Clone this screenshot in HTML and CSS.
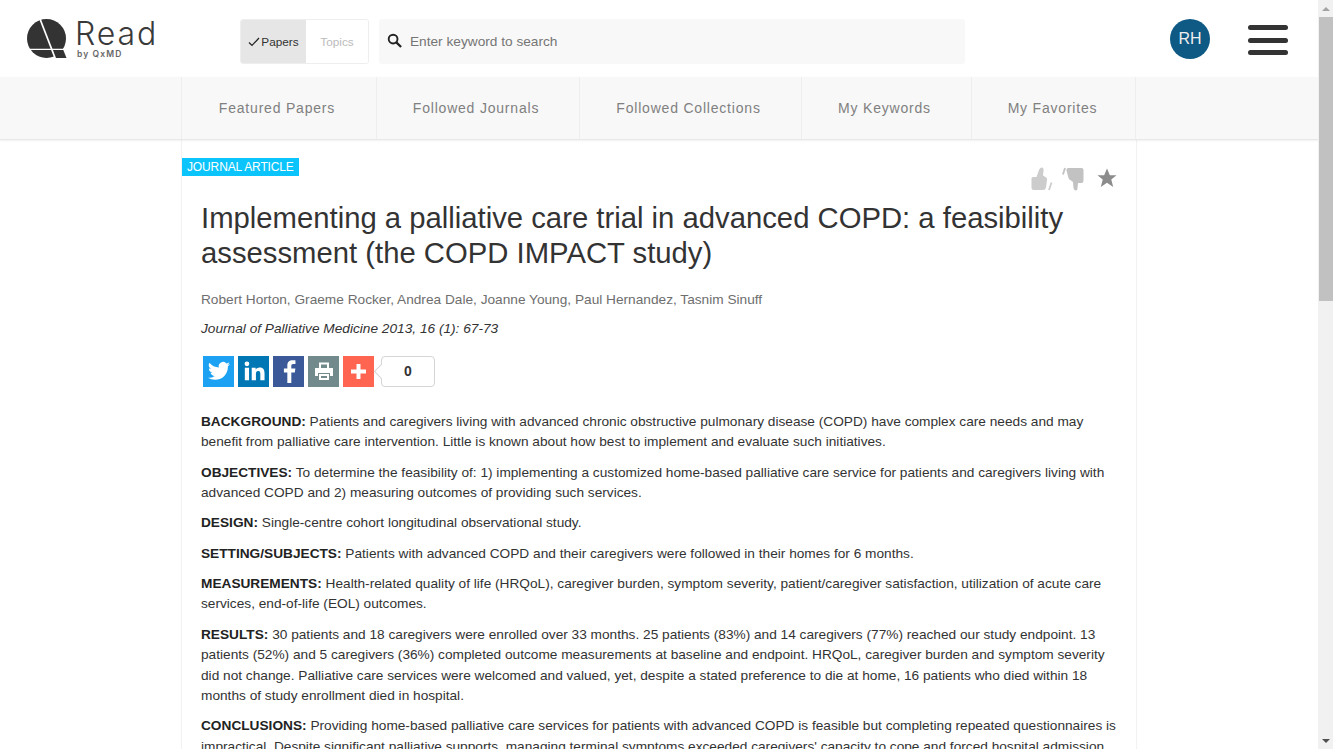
FILE: index.html
```html
<!DOCTYPE html>
<html lang="en">
<head>
<meta charset="utf-8">
<title>Read by QxMD</title>
<link rel="stylesheet" href="styles.css">
</head>
<body>
<div class="window">
  <div class="page">
    <header class="topbar">
      <a class="logo">
        <svg class="logo-mark" width="40" height="40" viewBox="0 0 40 40">
          <circle cx="19.500" cy="19.500" r="19.500" fill="#333"/>
          <path d="M27 29H35.500L39.500 39H28Z" fill="#333"/>
          <path d="M13 0L28.500 40" stroke="#fff" stroke-width="1.700" fill="none"/>
          <path d="M3 30.300L38 30.300" stroke="#fff" stroke-width="1.300" fill="none"/>
        </svg>
        <span class="logo-text">
          <span class="logo-read">Read</span>
          <span class="logo-by">by QxMD</span>
        </span>
      </a>
      <div class="toggle">
        <span class="toggle-on">
          <svg width="12" height="10" viewBox="0 0 12 10"><path d="M1 5.500L4 8.500L11 1" stroke="#222" stroke-width="1.200" fill="none"/></svg>Papers</span>
        <span class="toggle-off">Topics</span>
      </div>
      <div class="search">
        <svg class="search-icon" width="15" height="15" viewBox="0 0 16 16"><circle cx="6.500" cy="6.500" r="4.700" stroke="#222" stroke-width="2" fill="none"/><path d="M10 10L15 15" stroke="#222" stroke-width="2.400"/></svg>
        <span class="search-text">Enter keyword to search</span>
      </div>
      <div class="avatar">RH</div>
      <div class="burger"><i></i><i></i><i></i></div>
    </header>
    <nav class="tabs">
      <div class="tabs-inner">
        <a class="tab tab-1">Featured Papers</a>
        <a class="tab tab-2">Followed Journals</a>
        <a class="tab tab-3">Followed Collections</a>
        <a class="tab tab-4">My Keywords</a>
        <a class="tab tab-5">My Favorites</a>
      </div>
    </nav>
    <main class="article">
      <div class="badge-row">
        <span class="badge">JOURNAL ARTICLE</span>
        <div class="actions">
          <svg width="22" height="24" viewBox="0 0 22 24"><path d="M0.500 11.500Q0.500 10 2 10H5.500L8 3Q9 0 11 0.500Q13 1 12.500 4L12 8.500L14.500 10Q16.500 11 16 13L15 20.500Q14.500 23 12 23H3Q0.500 23 0.500 20.500Z" fill="#ccc"/><path d="M20.500 15.500L18 23" stroke="#ccc" stroke-width="1.800"/></svg>
          <svg width="22" height="24" viewBox="0 0 22 24"><path d="M21.500 3Q21.500 1 19.500 1H6.500Q4 1 4.500 3.500L6.500 11Q7 12.500 9 13.500L11 15L11.500 21Q12 23.500 14 23.500Q15.500 23.500 15.500 21L16 16H19.500Q21.500 16 21.500 13.500Z" fill="#c2c2c2"/><path d="M3 1L1 7.500" stroke="#c2c2c2" stroke-width="1.800"/></svg>
          <svg class="star" width="20" height="20" viewBox="0 0 21 20"><path d="M10.500 0L13.500 7H20.500L15 11.500L17 19.500L10.500 15L4 19.500L6 11.500L0.500 7H7.500Z" fill="#8c8c8c"/></svg>
        </div>
      </div>
      <h1 class="title">Implementing a palliative care trial in advanced COPD: a feasibility assessment (the COPD IMPACT study)</h1>
      <p class="authors">Robert Horton, Graeme Rocker, Andrea Dale, Joanne Young, Paul Hernandez, Tasnim Sinuff</p>
      <p class="journal">Journal of Palliative Medicine 2013, 16 (1): 67-73</p>
      <div class="share">
        <span class="sq sq-tw"><svg width="24" height="24" viewBox="0 0 24 24"><path fill="#fff" d="M23 5.100a9 9 0 0 1-2.600.7 4.500 4.500 0 0 0 2-2.500 9 9 0 0 1-2.900 1.100 4.500 4.500 0 0 0-7.700 4.100A12.800 12.800 0 0 1 2.500 3.800a4.500 4.500 0 0 0 1.400 6 4.500 4.500 0 0 1-2-.6v.1a4.500 4.500 0 0 0 3.600 4.400 4.500 4.500 0 0 1-2 .1 4.500 4.500 0 0 0 4.200 3.100A9 9 0 0 1 1 18.800 12.800 12.800 0 0 0 8 20.800c8.300 0 12.900-6.900 12.900-12.900v-.6A9 9 0 0 0 23 5.100z"/></svg></span>
        <span class="sq sq-li"><svg width="22" height="22" viewBox="0 0 24 24"><path fill="#fff" d="M2 8.500h4.600V22H2zM4.300 1.500a2.600 2.600 0 1 1 0 5.200 2.600 2.600 0 0 1 0-5.200zM9.500 8.500h4.300v1.900c.7-1.200 2.200-2.300 4.300-2.300 4.500 0 5.400 2.900 5.400 6.800V22h-4.600v-6.300c0-1.700-.1-3.700-2.300-3.700s-2.500 1.700-2.500 3.600V22H9.500z"/></svg></span>
        <span class="sq sq-fb"><svg width="24" height="24" viewBox="0 0 24 26"><path fill="#fff" d="M14.500 26V14.500h3.800l.6-4.300h-4.400V7.500c0-1.300.4-2.100 2.200-2.100H19V1.600C18.600 1.500 17.300 1.400 15.800 1.400c-3.300 0-5.600 2-5.600 5.700v3.100H6.500v4.300h3.700V26z"/></svg></span>
        <span class="sq sq-pr"><svg width="18" height="18" viewBox="0 0 18 18"><path fill="#fff" fill-rule="evenodd" d="M4 0.500h10v5.500h-2V2.500H6V6H4zM0 6h18v8h-3v-3H3v3H0zM4 12h10v6H4zM6 14v2h6v-2z"/></svg></span>
        <span class="sq sq-pl"><svg width="15" height="15" viewBox="0 0 15 15"><path fill="#fff" d="M5.500 0h4v5.500H15v4H9.500V15h-4V9.500H0v-4h5.500z"/></svg></span>
        <span class="count">0</span>
      </div>
      <div class="abstract">
        <p><b>BACKGROUND:</b> Patients and caregivers living with advanced chronic obstructive pulmonary disease (COPD) have complex care needs and may benefit from palliative care intervention. Little is known about how best to implement and evaluate such initiatives.</p>
        <p><b>OBJECTIVES:</b> To determine the feasibility of: 1) implementing a customized home-based palliative care service for patients and caregivers living with advanced COPD and 2) measuring outcomes of providing such services.</p>
        <p><b>DESIGN:</b> Single-centre cohort longitudinal observational study.</p>
        <p><b>SETTING/SUBJECTS:</b> Patients with advanced COPD and their caregivers were followed in their homes for 6 months.</p>
        <p><b>MEASUREMENTS:</b> Health-related quality of life (HRQoL), caregiver burden, symptom severity, patient/caregiver satisfaction, utilization of acute care services, end-of-life (EOL) outcomes.</p>
        <p><b>RESULTS:</b> 30 patients and 18 caregivers were enrolled over 33 months. 25 patients (83%) and 14 caregivers (77%) reached our study endpoint. 13 patients (52%) and 5 caregivers (36%) completed outcome measurements at baseline and endpoint. HRQoL, caregiver burden and symptom severity did not change. Palliative care services were welcomed and valued, yet, despite a stated preference to die at home, 16 patients who died within 18 months of study enrollment died in hospital.</p>
        <p><b>CONCLUSIONS:</b> Providing home-based palliative care services for patients with advanced COPD is feasible but completing repeated questionnaires is impractical. Despite significant palliative supports, managing terminal symptoms exceeded caregivers' capacity to cope and forced hospital admission.</p>
      </div>
    </main>
  </div>
  <div class="scrollbar">
    <span class="arrow arrow-up"></span>
    <span class="thumb"></span>
    <span class="arrow arrow-down"></span>
  </div>
</div>
</body>
</html>
```
FILE: styles.css
```css
* { box-sizing: border-box; }
html, body { margin: 0; height: 100%; overflow: hidden; }
body { font-family: "Liberation Sans", Arial, sans-serif; color: #333; background: #fff; }
.window { display: flex; height: 749px; overflow: hidden; }
.page { flex: 0 0 1318px; width: 1318px; height: 749px; overflow: hidden; }

.topbar { display: flex; align-items: flex-start; height: 77px; position: relative; }
.logo { display: flex; margin: 19px 0 0 27px; width: 213px; }
.logo-mark { flex: none; }
.logo-text { display: flex; flex-direction: column; margin-left: 9px; }
.logo-read { font-family: "Inter", "Liberation Sans", sans-serif; font-weight: 350; font-size: 32px; line-height: 30px; color: #3a3a3a; letter-spacing: 1.900px; margin-left: -1px; }
.logo-by { font-family: "Inter", "Liberation Sans", sans-serif; font-size: 8.500px; line-height: 10px; font-weight: 600; color: #666; letter-spacing: 1.100px; margin-left: 1px; }

.toggle { display: flex; width: 129px; height: 45px; margin-top: 19px; border: 1px solid #eee; border-radius: 3px; font-size: 11.800px; overflow: hidden; }
.toggle-on { display: flex; align-items: center; justify-content: center; gap: 1px; width: 65px; background: #e6e6e6; color: #333; }
.toggle-off { display: flex; align-items: center; justify-content: center; flex: 1; color: #bbb; background: #fff; }
.search { display: flex; align-items: center; width: 586px; height: 45px; margin: 19px 0 0 10px; padding-left: 8px; background: #f8f8f8; border-radius: 3px; }
.search-icon { margin: -3px 0 0 0; }
.search-text { margin-left: 8px; font-size: 13.680px; color: #757575; }
.avatar { width: 40px; height: 40px; margin: 19px 0 0 205px; border-radius: 50%; background: #0f5a85; color: #eee; font-size: 16px; line-height: 39px; text-align: center; }
.burger { display: flex; flex-direction: column; gap: 7.500px; width: 40px; margin: 25px 0 0 38px; }
.burger i { display: block; height: 5px; border-radius: 3px; background: #333; }

.tabs { height: 63px; background: #f8f8f8; border-bottom: 1px solid #e8e8e8; box-shadow: 0 1px 2px rgba(0,0,0,.06); padding-left: 181px; position: relative; }
.tabs-inner { display: flex; height: 62px; border-left: 1px solid #eee; }
.tab { display: flex; align-items: center; justify-content: center; height: 100%; border-right: 1px solid #eee; color: #808080; font-size: 14px; letter-spacing: 0.800px; padding: 0 4px 0 0; }
.tab-1 { width: 195px; }
.tab-2 { width: 203px; }
.tab-3 { width: 222px; }
.tab-4 { width: 170px; }
.tab-5 { width: 164px; padding-right: 2px; }

.article { width: 956px; margin-left: 181px; padding: 18px 19px 0 19px; border-left: 1px solid #f2f2f2; border-right: 1px solid #f2f2f2; min-height: 620px; }
.badge-row { display: flex; justify-content: space-between; align-items: flex-start; margin-left: -19px; height: 31px; }
.badge { height: 18px; padding: 0 5px; background: #0bc4fb; color: #fff; font-size: 12px; line-height: 18px; letter-spacing: -0.130px; }
.actions { display: flex; gap: 9px; margin-top: 9px; align-items: flex-start; }
.star { margin: 1px 0 0 4px; }
.title { margin: 12px 0 0; font-weight: 400; font-size: 29.270px; line-height: 35px; color: #333; }
.authors { margin: 19px 0 0; font-size: 13.680px; line-height: 20px; color: #6e6e6e; }
.journal { margin: 9px 0 0; font-size: 13.680px; line-height: 20px; font-style: italic; color: #333; }
.share { display: flex; align-items: center; gap: 4px; margin: 16px 0 0 2px; height: 32px; }
.sq { display: flex; align-items: center; justify-content: center; width: 31px; height: 31px; overflow: hidden; }
.sq-tw { background: #1da1f2; }
.sq-li { background: #0077b5; }
.sq-fb { background: #3b5998; }
.sq-pr { background: #738a8d; }
.sq-pl { background: #ff6550; }
.count { position: relative; width: 54px; height: 31px; margin-left: 3px; border: 1px solid #d5d5d5; border-radius: 4px; background: #fff; color: #333; font-size: 14px; font-weight: 700; line-height: 29px; text-align: center; }
.count::before { content: ""; position: absolute; left: -6px; top: 9px; width: 10px; height: 10px; background: #fff; border-left: 1px solid #d5d5d5; border-bottom: 1px solid #d5d5d5; transform: rotate(45deg); }
.abstract { margin-top: 25px; font-size: 13.680px; line-height: 20.400px; color: #333; }
.abstract p { margin: 0 0 9.900px; }
.abstract b { color: #222; }

.scrollbar { position: relative; flex: 0 0 15px; width: 15px; height: 749px; background: #f1f1f1; }
.thumb { position: absolute; left: 1px; top: 17px; width: 14px; height: 284px; background: #c1c1c1; }
.arrow { position: absolute; left: 4px; width: 0; height: 0; border-left: 4px solid transparent; border-right: 4px solid transparent; }
.arrow-up { top: 7px; border-bottom: 4px solid #a3a3a3; }
.arrow-down { bottom: 6px; border-top: 4px solid #505050; }
```
